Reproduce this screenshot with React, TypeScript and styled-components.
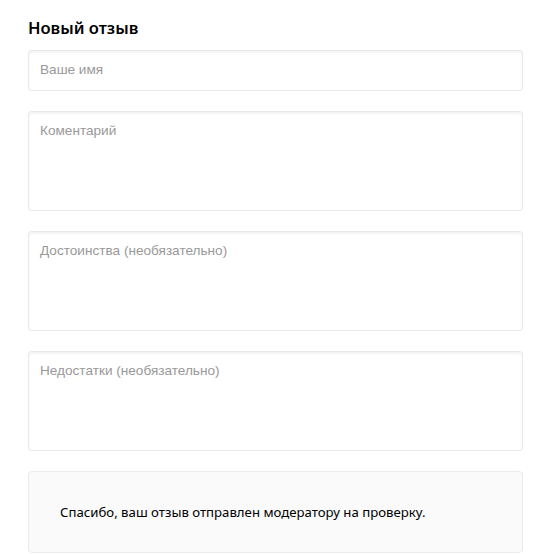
import { FC } from 'react';
import styled, { createGlobalStyle } from 'styled-components';

const GlobalStyle = createGlobalStyle`
  html, body {
    margin: 0;
    padding: 0;
    background: #fff;
  }
`;

const Wrapper = styled.div`
  width: 495px;
  padding: 17px 0 0 28px;
  display: flex;
  flex-direction: column;
`;

const Title = styled.h3`
  margin: 0 0 11px;
  font-family: 'Noto Sans', 'Open Sans', sans-serif;
  font-weight: 600;
  font-size: 16.5px;
  line-height: 22px;
  color: #000;
`;

const Fields = styled.div`
  display: flex;
  flex-direction: column;
  gap: 20px;
`;

const fieldBase = `
  box-sizing: border-box;
  width: 100%;
  margin: 0;
  border: 1px solid #e9e9e9;
  border-radius: 3px;
  background: #fff;
  box-shadow: inset 0 2px 3px rgba(0, 0, 0, 0.05);
  font-family: 'Liberation Sans', Arial, sans-serif;
  font-size: 13.6px;
  color: #333;
  outline: none;
  padding: 0 11px;

  &::placeholder {
    color: #999;
  }
`;

const Input = styled.input`
  ${fieldBase}
  height: 41px;
  padding-bottom: 2px;
`;

const TextArea = styled.textarea`
  ${fieldBase}
  display: block;
  height: 100px;
  padding-top: 11px;
  resize: none;
`;

const Notice = styled.div`
  box-sizing: border-box;
  height: 82px;
  display: flex;
  align-items: center;
  padding: 0 31px;
  border: 1px solid #ebebeb;
  border-radius: 4px;
  background: #fafafa;
  font-family: 'Noto Sans', 'Open Sans', sans-serif;
  font-size: 13.2px;
  color: #000;
`;

const App: FC = () => {
  return (
    <>
      <GlobalStyle />
      <Wrapper>
        <Title>Новый отзыв</Title>
        <Fields>
          <Input placeholder="Ваше имя" />
          <TextArea placeholder="Коментарий" />
          <TextArea placeholder="Достоинства (необязательно)" />
          <TextArea placeholder="Недостатки (необязательно)" />
          <Notice>Спасибо, ваш отзыв отправлен модератору на проверку.</Notice>
        </Fields>
      </Wrapper>
    </>
  );
};

export default App;
